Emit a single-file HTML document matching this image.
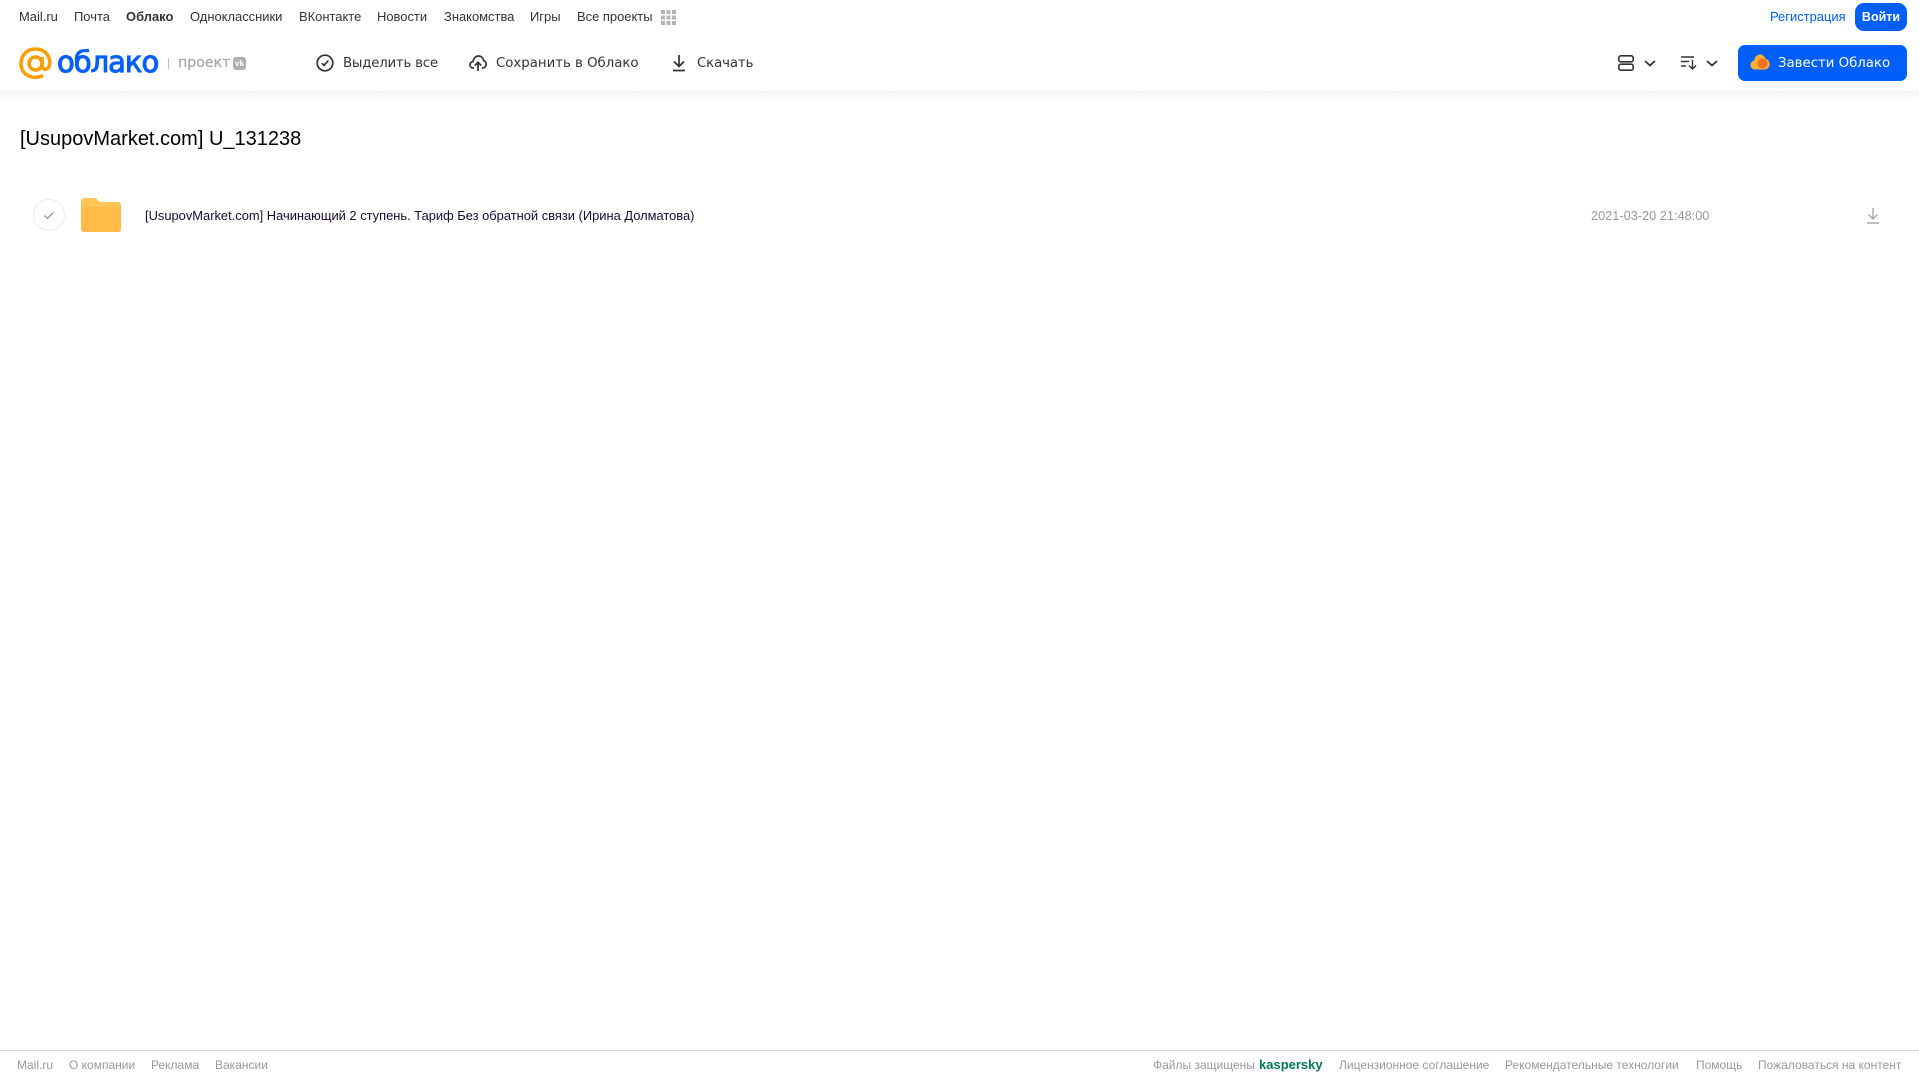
<!DOCTYPE html>
<html lang="ru"><head><meta charset="utf-8"><title>Облако</title>
<style>
html,body{margin:0;padding:0;background:#fff;width:1919px;height:1079px;overflow:hidden}
body{position:relative;font-family:"Liberation Sans",Arial,sans-serif}
.t{position:absolute;white-space:nowrap;line-height:20px}
.n{top:7px;font-size:12.95px;color:#333}
.b{top:54px;color:#333;font-family:"DejaVu Sans",sans-serif;font-size:13.3px}
.f{top:1055px;font-size:12px;color:#999}
svg{position:absolute;overflow:visible}
</style></head><body>
<div style="position:absolute;left:0;top:91px;width:1919px;height:8px;background:linear-gradient(#f2f2f2,#fff)"></div>
<span class="t n" style="left:19px">Mail.ru</span>
<span class="t n" style="left:74px">Почта</span>
<span class="t n" style="left:126px;font-weight:bold">Облако</span>
<span class="t n" style="left:190px">Одноклассники</span>
<span class="t n" style="left:299px">ВКонтакте</span>
<span class="t n" style="left:377px">Новости</span>
<span class="t n" style="left:444px">Знакомства</span>
<span class="t n" style="left:530px">Игры</span>
<span class="t n" style="left:577px">Все проекты</span>
<svg style="left:661px;top:10px" width="15" height="15" fill="#b4b4b4"><rect width="4" height="4"/><rect x="5.500" width="4" height="4"/><rect x="11" width="4" height="4"/><rect y="5.500" width="4" height="4"/><rect x="5.500" y="5.500" width="4" height="4"/><rect x="11" y="5.500" width="4" height="4"/><rect y="11" width="4" height="4"/><rect x="5.500" y="11" width="4" height="4"/><rect x="11" y="11" width="4" height="4"/></svg>
<span class="t n" style="left:1770px;color:#005ff9">Регистрация</span>
<div style="position:absolute;left:1855px;top:3px;width:52px;height:28px;border-radius:9px;background:#005ff9;color:#fff;font-size:12.500px;line-height:28px;text-align:center;font-weight:bold">Войти</div>

<svg style="left:19px;top:47px" width="33" height="33" viewBox="0 0 33 33" fill="none" stroke="#ff9e00" stroke-width="3.600"><circle cx="16.500" cy="16.500" r="6.500"/><path d="M23 10v8.500c0 5 6.500 5 7.500-.5 1.500-8-4-16-14-16A14.200 14.200 0 0 0 2 16.500C2 28 14 33.500 24 28.500"/></svg>
<span class="t" style="left:57px;top:46px;font-family:'DejaVu Sans',sans-serif;font-size:29px;line-height:32px;color:#005ff9;-webkit-text-stroke:1px #005ff9;letter-spacing:-1px">облако</span>
<div style="position:absolute;left:168px;top:58px;width:1px;height:11px;background:#bbb"></div>
<span class="t" style="left:178px;top:53px;font-family:'DejaVu Sans',sans-serif;font-size:14px;color:#a8a8a8;-webkit-text-stroke:.25px #a8a8a8;letter-spacing:.1px">проект</span>
<div style="position:absolute;left:233px;top:57px;width:13px;height:13px;border-radius:3px;background:#b0b0b0;color:#fff;font-size:8px;line-height:13px;text-align:center;font-weight:bold">vk</div>

<svg style="left:316px;top:54px" width="18" height="18" fill="none" stroke="#333" stroke-width="1.700"><circle cx="9" cy="9" r="7.800"/><path d="M5.800 9.200 8 11.400 12.300 6.600"/></svg>
<span class="t b" style="left:343px;letter-spacing:-.2px">Выделить все</span>
<svg style="left:469px;top:54px" width="18" height="18" fill="none" stroke="#333" stroke-width="1.700"><path d="M5 14H4.200C2.200 14 1 12.500 1 10.800s1.200-3 3-3.200C4.500 4.200 6.800 2 9.500 2c2.800 0 4.800 2 5.200 4.800 1.500.3 2.500 1.700 2.500 3.300 0 2-1.500 3.900-3.700 3.900H13M9 17V8.500M5.800 11.500 9 8.300l3.200 3.200"/></svg>
<span class="t b" style="left:496px">Сохранить в Облако</span>
<svg style="left:671px;top:54px" width="16" height="18" fill="none" stroke="#333" stroke-width="1.700"><path d="M8 1v11M3 7.500l5 5 5-5M2 16.500h12"/></svg>
<span class="t b" style="left:697px;letter-spacing:-.1px">Скачать</span>

<svg style="left:1618px;top:55px" width="16" height="16" fill="none" stroke="#333" stroke-width="1.600"><rect x=".8" y=".8" width="14.400" height="6" rx="2"/><rect x=".8" y="9.200" width="14.400" height="6" rx="2"/></svg>
<svg style="left:1644px;top:60px" width="12" height="7" fill="none" stroke="#333" stroke-width="1.800"><path d="M1 1l5 4.500L11 1"/></svg>
<svg style="left:1681px;top:56px" width="16" height="14" fill="none" stroke="#333" stroke-width="1.400"><path d="M0 1h13M0 5.500h8M0 10h5M11.500 4v9M8 9.500l3.500 3.500L15 9.500"/></svg>
<svg style="left:1706px;top:60px" width="12" height="7" fill="none" stroke="#333" stroke-width="1.800"><path d="M1 1l5 4.500L11 1"/></svg>
<div style="position:absolute;left:1738px;top:45px;width:169px;height:36px;border-radius:7px;background:#005ff9"></div>
<svg style="left:1750px;top:54px" width="19" height="16"><path d="M5 15.500a4.500 4.500 0 0 1-1-8.900C5 2.500 7.500.5 10 .5c2.800 0 4.800 1.800 5.400 4.300a5.400 5.400 0 0 1-.9 10.700z" fill="#ffb032"/><circle cx="12.500" cy="9.500" r="5" fill="#f2701f"/></svg>
<span class="t b" style="left:1778px;color:#fff">Завести Облако</span>

<span class="t" style="left:20px;top:127px;font-size:20px;line-height:24px;color:#000">[UsupovMarket.com] U_131238</span>

<div style="position:absolute;left:33px;top:199px;width:30px;height:30px;border:1px solid #ececec;border-radius:50%"></div>
<svg style="left:43px;top:211px" width="12" height="9" fill="none" stroke="#999" stroke-width="1.300"><path d="M1.500 4.500 4.500 7.500 10.500 1.500"/></svg>
<svg style="left:81px;top:198px" width="40" height="34"><path d="M0 3a3 3 0 0 1 3-3h9c3 0 4 1 5 2.500S19 4 21 4h16a3 3 0 0 1 3 3v24a3 3 0 0 1-3 3H3a3 3 0 0 1-3-3z" fill="#ffc555"/><path d="M0 9h40v22a3 3 0 0 1-3 3H3a3 3 0 0 1-3-3z" fill="#ffbc48"/></svg>
<span class="t" style="left:145px;top:206px;font-size:12.9px;color:#1a0a2e">[UsupovMarket.com] Начинающий 2 ступень. Тариф Без обратной связи (Ирина Долматова)</span>
<span class="t" style="left:1591px;top:206px;font-size:12.75px;color:#999">2021-03-20 21:48:00</span>
<svg style="left:1866px;top:207px" width="14" height="17" fill="none" stroke="#a8a8a8" stroke-width="1.400"><path d="M7 1v11M2.500 7.500 7 12l4.500-4.500M1 16h12"/></svg>

<div style="position:absolute;left:0;top:1050px;width:1919px;height:1px;background:#dcdcdc"></div>
<span class="t f" style="left:17px">Mail.ru</span>
<span class="t f" style="left:69px">О компании</span>
<span class="t f" style="left:151px">Реклама</span>
<span class="t f" style="left:215px">Вакансии</span>
<span class="t f" style="left:1153px">Файлы защищены</span>
<span class="t f" style="left:1259px;color:#00775f;font-weight:bold;font-size:13px">kaspersky</span>
<span class="t f" style="left:1339px">Лицензионное соглашение</span>
<span class="t f" style="left:1505px">Рекомендательные технологии</span>
<span class="t f" style="left:1696px">Помощь</span>
<span class="t f" style="left:1758px">Пожаловаться на контент</span>
</body></html>
